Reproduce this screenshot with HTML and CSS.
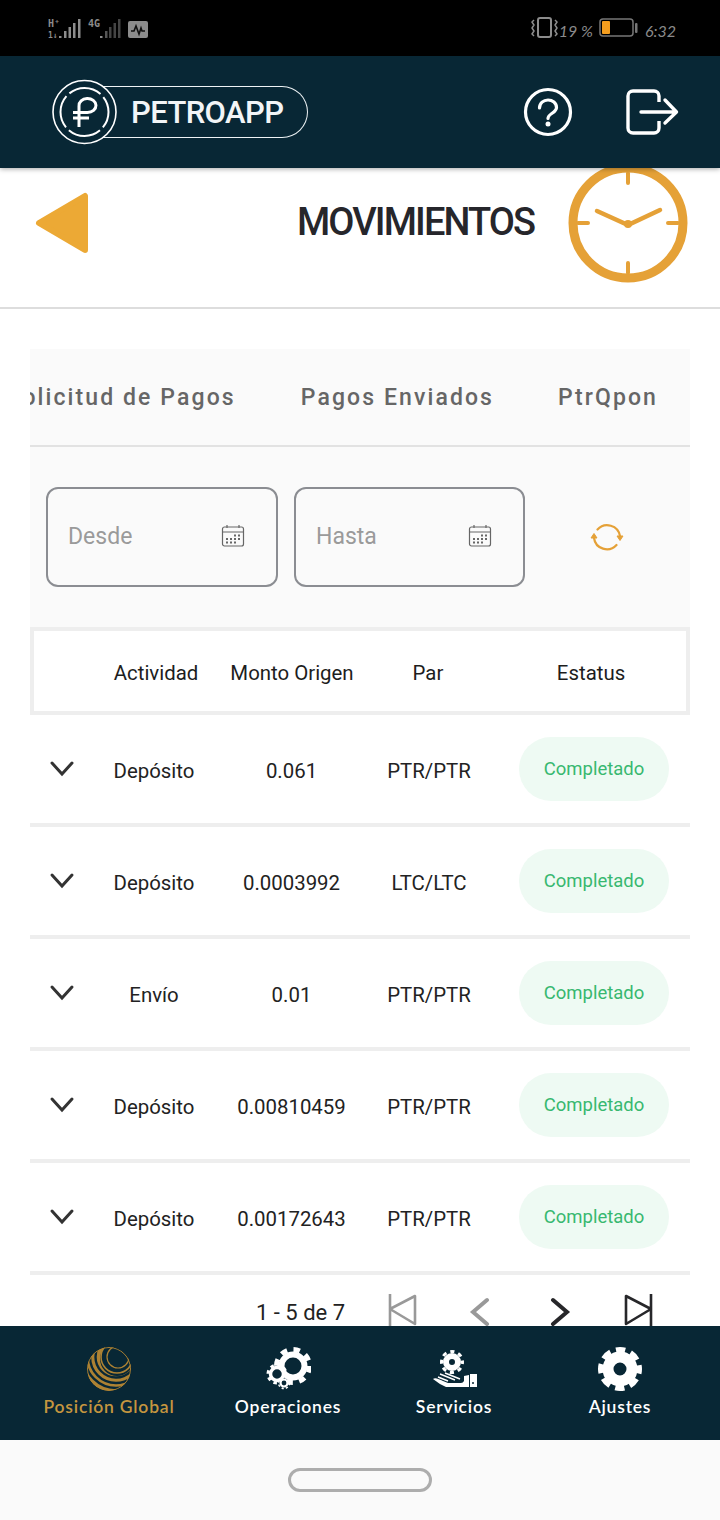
FILE: index.html
```html
<!DOCTYPE html>
<html lang="es">
<head>
<meta charset="utf-8">
<title>PetroApp - Movimientos</title>
<link rel="stylesheet" href="styles.css">
</head>
<body>
<div class="app">
  <div class="statusbar">
    <svg class="st-left" width="110" height="24" viewBox="0 0 110 24">
      <text x="1" y="9" class="st-tiny">H⁺</text>
      <text x="1" y="20" class="st-tiny st-tiny-s">1↓</text>
      <g fill="#8c8c8c"><rect x="12" y="18" width="2.500" height="2"/><rect x="17" y="13" width="2.500" height="7"/><rect x="21.500" y="9" width="2.500" height="11"/><rect x="26" y="5" width="2.500" height="15"/><rect x="31" y="1" width="2.500" height="19"/></g>
      <text x="41" y="9" class="st-tiny">4G</text>
      <g><rect x="53" y="18" width="2.500" height="2" fill="#8c8c8c"/><rect x="58" y="13" width="2.500" height="7" fill="#555"/><rect x="62" y="9" width="2.500" height="11" fill="#444"/><rect x="66.500" y="5" width="2.500" height="15" fill="#444"/><rect x="71" y="1" width="2.500" height="19" fill="#444"/></g>
      <rect x="81" y="3" width="20" height="17" rx="2" fill="#8c8c8c"/>
      <path d="M84 13h3l2-5 3 8 2-6 1 3h3" fill="none" stroke="#111" stroke-width="1.600"/>
    </svg>
    <div class="st-right">
      <svg width="27" height="22" viewBox="0 0 27 22"><rect x="7" y="1" width="13" height="19" rx="2" fill="none" stroke="#8c8c8c" stroke-width="2"/><path d="M3 3l-2 2 2 3-2 3 2 3-2 3 2 2M24 3l2 2-2 3 2 3-2 3 2 3-2 2" fill="none" stroke="#8c8c8c" stroke-width="1.500"/></svg>
      <span class="st-pct">19 %</span>
      <svg class="st-batt" width="39" height="20" viewBox="0 0 39 20"><rect x="1" y="1" width="33" height="17" rx="3" fill="none" stroke="#777" stroke-width="1.500"/><rect x="3" y="3" width="8" height="13" rx="1" fill="#f59e1e"/><rect x="36" y="5" width="2.500" height="10" rx="1" fill="#777"/></svg>
      <span class="st-time">6:32</span>
    </div>
  </div>

  <header class="topbar">
    <div class="logo">
      <svg class="logo-mark" width="65" height="66" viewBox="0 0 65 66">
        <circle cx="32.500" cy="33" r="31.500" fill="#082735" stroke="#fff" stroke-width="1.600"/>
        <circle cx="32.500" cy="33" r="24" fill="none" stroke="#fff" stroke-width="2" stroke-dasharray="33.700 4" stroke-dashoffset="17"/>
        <path d="M27 48V27a8.500 7 0 1 1 8.500 6.500H21M21 39H37" fill="none" stroke="#fff" stroke-width="3"/>
      </svg>
      <div class="logo-pill"><span class="logo-text">PETROAPP</span></div>
    </div>
    <div class="top-actions">
      <svg width="50" height="50" viewBox="0 0 50 50"><circle cx="25" cy="25" r="22.500" fill="none" stroke="#fff" stroke-width="3.200"/><path d="M16.500 21c0-5 4-8 8.500-8s8.500 3 8.500 7.500c0 5.500-8.500 6-8.500 11" fill="none" stroke="#fff" stroke-width="3.200" stroke-linecap="round"/><circle cx="25" cy="37" r="2.500" fill="#fff"/></svg>
      <svg width="54" height="46" viewBox="0 0 54 46"><path d="M34 13V7a5 5 0 0 0-5-5H8a5 5 0 0 0-5 5v32a5 5 0 0 0 5 5h21a5 5 0 0 0 5-5v-7" fill="none" stroke="#fff" stroke-width="3.400"/><path d="M16 23h35M40 11l11.500 12L40 34" fill="none" stroke="#fff" stroke-width="3.400" stroke-linecap="round" stroke-linejoin="round"/></svg>
    </div>
  </header>

  <main class="content">
    <section class="title-row">
      <svg class="back" width="56" height="62" viewBox="0 0 56 62"><path d="M4 31L50 4V58Z" fill="#eca935" stroke="#eca935" stroke-width="6" stroke-linejoin="round"/></svg>
      <h1 class="title">MOVIMIENTOS</h1>
      <svg class="clock" width="120" height="120" viewBox="0 0 120 120">
        <circle cx="60" cy="60" r="55" fill="#fff" stroke="#e5a137" stroke-width="9"/>
        <path d="M60 10V20M60 100V110M10 60H20M100 60H110" stroke="#e5a137" stroke-width="4" stroke-linecap="round"/>
        <path d="M29 48L60 62L92 47" fill="none" stroke="#e5a137" stroke-width="4.500" stroke-linecap="round"/>
        <circle cx="60" cy="61" r="4" fill="#e5a137"/>
      </svg>
    </section>

    <section class="panel">
      <nav class="tabs">
        <span class="tab">Solicitud de Pagos</span>
        <span class="tab">Pagos Enviados</span>
        <span class="tab">PtrQpon</span>
      </nav>
      <div class="filters">
        <div class="field">
          <span class="field-label">Desde</span>
          <svg width="24" height="24" viewBox="0 0 24 24"><g fill="none" stroke="#666" stroke-width="1.200"><rect x="1.500" y="3" width="21" height="19" rx="2"/><path d="M1.500 8h21M6 1v3M18 1v3"/></g><g fill="#666"><rect x="13" y="10.500" width="2" height="2"/><rect x="17" y="10.500" width="2" height="2"/><rect x="5" y="14" width="2" height="2"/><rect x="9" y="14" width="2" height="2"/><rect x="13" y="14" width="2" height="2"/><rect x="17" y="14" width="2" height="2"/><rect x="5" y="17.500" width="2" height="2"/><rect x="9" y="17.500" width="2" height="2"/><rect x="13" y="17.500" width="2" height="2"/></g></svg>
        </div>
        <div class="field">
          <span class="field-label">Hasta</span>
          <svg width="24" height="24" viewBox="0 0 24 24"><g fill="none" stroke="#666" stroke-width="1.200"><rect x="1.500" y="3" width="21" height="19" rx="2"/><path d="M1.500 8h21M6 1v3M18 1v3"/></g><g fill="#666"><rect x="13" y="10.500" width="2" height="2"/><rect x="17" y="10.500" width="2" height="2"/><rect x="5" y="14" width="2" height="2"/><rect x="9" y="14" width="2" height="2"/><rect x="13" y="14" width="2" height="2"/><rect x="17" y="14" width="2" height="2"/><rect x="5" y="17.500" width="2" height="2"/><rect x="9" y="17.500" width="2" height="2"/><rect x="13" y="17.500" width="2" height="2"/></g></svg>
        </div>
        <div class="refresh">
          <svg width="36" height="30" viewBox="0 0 36 30"><path d="M8.500 7.500A13 13 0 0 1 31 14M27.500 23A13 13 0 0 1 5 16" fill="none" stroke="#e5a137" stroke-width="2.200" stroke-linecap="round"/><path d="M2 16L5 11.500 8 16ZM28 14L31 18.500 34 14Z" fill="#e5a137" stroke="#e5a137" stroke-linejoin="round"/></svg>
        </div>
      </div>
    </section>

    <section class="table">
      <div class="thead">
        <span></span><span>Actividad</span><span>Monto Origen</span><span>Par</span><span class="th-status">Estatus</span>
      </div>
      <div class="row">
        <svg class="chev" width="28" height="18" viewBox="0 0 28 18"><path d="M4 3L14 14 24 3" fill="none" stroke="#333" stroke-width="3" stroke-linecap="round"/></svg>
        <span>Depósito</span><span>0.061</span><span>PTR/PTR</span><span class="pill">Completado</span>
      </div>
      <div class="row">
        <svg class="chev" width="28" height="18" viewBox="0 0 28 18"><path d="M4 3L14 14 24 3" fill="none" stroke="#333" stroke-width="3" stroke-linecap="round"/></svg>
        <span>Depósito</span><span>0.0003992</span><span>LTC/LTC</span><span class="pill">Completado</span>
      </div>
      <div class="row">
        <svg class="chev" width="28" height="18" viewBox="0 0 28 18"><path d="M4 3L14 14 24 3" fill="none" stroke="#333" stroke-width="3" stroke-linecap="round"/></svg>
        <span>Envío</span><span>0.01</span><span>PTR/PTR</span><span class="pill">Completado</span>
      </div>
      <div class="row">
        <svg class="chev" width="28" height="18" viewBox="0 0 28 18"><path d="M4 3L14 14 24 3" fill="none" stroke="#333" stroke-width="3" stroke-linecap="round"/></svg>
        <span>Depósito</span><span>0.00810459</span><span>PTR/PTR</span><span class="pill">Completado</span>
      </div>
      <div class="row">
        <svg class="chev" width="28" height="18" viewBox="0 0 28 18"><path d="M4 3L14 14 24 3" fill="none" stroke="#333" stroke-width="3" stroke-linecap="round"/></svg>
        <span>Depósito</span><span>0.00172643</span><span>PTR/PTR</span><span class="pill">Completado</span>
      </div>
      <div class="pager">
        <span class="pager-text">1 - 5 de 7</span>
        <svg class="pg pg-first" width="30" height="36" viewBox="0 0 30 36"><path d="M2 0V36M27 2V30L2 15Z" fill="none" stroke="#999" stroke-width="2.600" stroke-linejoin="round"/></svg>
        <svg class="pg pg-prev" width="22" height="30" viewBox="0 0 22 30"><path d="M18 3L4 15 18 27" fill="none" stroke="#999" stroke-width="4" stroke-linecap="round"/></svg>
        <svg class="pg pg-next" width="22" height="30" viewBox="0 0 22 30"><path d="M4 3L18 15 4 27" fill="none" stroke="#27272a" stroke-width="4" stroke-linecap="round"/></svg>
        <svg class="pg pg-last" width="30" height="36" viewBox="0 0 30 36"><path d="M28 0V36M3 2V30L28 15Z" fill="none" stroke="#27272a" stroke-width="2.600" stroke-linejoin="round"/></svg>
      </div>
    </section>
  </main>

  <nav class="bottomnav">
    <div class="nav-item nav-active">
      <svg width="46" height="46" viewBox="0 0 46 46">
        <defs><clipPath id="globe"><circle cx="23" cy="23" r="22"/></clipPath></defs>
        <g clip-path="url(#globe)">
          <circle cx="23" cy="23" r="22" fill="#ad8233"/>
          <g fill="none" stroke="#082735" stroke-width="2.400">
            <circle cx="30" cy="11" r="31"/><circle cx="30" cy="11" r="26"/><circle cx="30" cy="11" r="20.500"/>
          </g>
          <circle cx="31" cy="13" r="17" fill="#082735"/>
          <circle cx="31" cy="11" r="16" fill="none" stroke="#ad8233" stroke-width="1.600"/>
          <circle cx="32" cy="11" r="11" fill="none" stroke="#ad8233" stroke-width="1.200"/>
          <circle cx="23" cy="23" r="21.500" fill="none" stroke="#ad8233" stroke-width="1"/>
        </g>
      </svg>
      <span class="nav-label">Posición Global</span>
    </div>
    <div class="nav-item">
      <svg width="46" height="46" viewBox="0 0 46 46">
        <circle cx="28" cy="20" r="11.500" fill="none" stroke="#fff" stroke-width="6"/>
        <circle cx="28" cy="20" r="16.500" fill="none" stroke="#fff" stroke-width="5" stroke-dasharray="6.500 6.460"/>
        <circle cx="12" cy="28" r="6.500" fill="#082735" stroke="#fff" stroke-width="3.500"/>
        <circle cx="12" cy="28" r="9" fill="none" stroke="#fff" stroke-width="3" stroke-dasharray="3.500 3.570"/>
        <circle cx="19" cy="37" r="3.500" fill="#082735" stroke="#fff" stroke-width="2.200"/>
        <circle cx="19" cy="37" r="5.500" fill="none" stroke="#fff" stroke-width="1.500" stroke-dasharray="2.200 2.120"/>
      </svg>
      <span class="nav-label">Operaciones</span>
    </div>
    <div class="nav-item">
      <svg width="46" height="46" viewBox="0 0 46 46">
        <circle cx="21" cy="16" r="6" fill="none" stroke="#fff" stroke-width="6"/>
        <circle cx="21" cy="16" r="10.500" fill="none" stroke="#fff" stroke-width="3" stroke-dasharray="4.200 4.050" stroke-dashoffset="2.100"/>
        <path d="M2 33C4 31 8 33 12 35L17 37H30Q32 37 33 35V30L38 29V41H18H15Q8 38 2 33Z" fill="#fff"/>
        <path d="M39 28H46V41H39Z" fill="#fff"/>
        <path d="M7 31L17 35M9 28L24 34M14 27L29 33" fill="none" stroke="#fff" stroke-width="1.400"/>
        <circle cx="42" cy="37" r="1" fill="#082735"/>
      </svg>
      <span class="nav-label">Servicios</span>
    </div>
    <div class="nav-item">
      <svg width="46" height="46" viewBox="0 0 46 46">
        <circle cx="23" cy="23" r="12" fill="none" stroke="#fff" stroke-width="11"/>
        <circle cx="23" cy="23" r="18.500" fill="none" stroke="#fff" stroke-width="7" stroke-dasharray="9 5.530" stroke-dashoffset="4.500"/>
      </svg>
      <span class="nav-label">Ajustes</span>
    </div>
  </nav>

  <div class="androidbar"><span class="home-pill"></span></div>
</div>
</body>
</html>
```
FILE: styles.css
```css
* { box-sizing: border-box; }
html, body { margin: 0; padding: 0; }
body { background: #fff; font-family: "Roboto", "Liberation Sans", sans-serif; }

.app { width: 720px; height: 1520px; display: flex; flex-direction: column; overflow: hidden; }

/* status bar */
.statusbar { height: 56px; flex: none; background: #000; display: flex; justify-content: space-between; align-items: center; padding: 0 44px 0 47px; }
.st-left { margin-top: 4px; }
.st-tiny { font: 700 10px "DejaVu Sans Mono", monospace; fill: #8c8c8c; }
.st-tiny-s { font-size: 8px; }
.st-right { display: flex; align-items: center; color: #8a8a8a; font: italic 400 16px "Lato", "Roboto", sans-serif; }
.st-pct { margin: 4px 6px 0 1px; }
.st-time { margin: 4px 0 0 7px; }

/* top bar */
.topbar { height: 112px; flex: none; background: #082735; display: flex; align-items: center; justify-content: space-between; padding: 0 41px 0 52px; position: relative; z-index: 2; box-shadow: 0 1px 5px rgba(0,0,0,.35); }
.logo { display: flex; align-items: center; margin-top: -1px; }
.logo-mark { position: relative; z-index: 1; margin-right: -18px; }
.logo-pill { width: 209px; height: 52px; border: 1.500px solid #eef3f5; border-left: 0; border-radius: 0 26px 26px 0; display: flex; align-items: center; padding: 2px 0 0 32px; }
.logo-text { color: #f2f5f7; font: 500 31px "Roboto", sans-serif; letter-spacing: -.6px; line-height: 1; }
.top-actions { display: flex; align-items: center; gap: 52px; }

/* content */
.content { flex: 1; min-height: 0; overflow: hidden; background: #fff; }
.title-row { height: 141px; border-bottom: 2px solid #ddd; display: flex; align-items: flex-start; padding: 0 32px 0 35px; }
.back { flex: none; margin-top: 24px; }
.title { margin: 34px 0 0 206px; width: 238px; flex: none; font: 500 38px/40px "Roboto", sans-serif; color: #26262b; letter-spacing: -1.900px; white-space: nowrap; }
.clock { flex: none; margin: -5px 0 0 33px; }

.panel { margin: 40px 30px 0; background: #fafafa; }
.tabs { height: 98px; border-bottom: 2px solid #e2e2e2; display: flex; justify-content: flex-end; align-items: center; gap: 65px; padding: 0 32px 0 0; overflow: hidden; }
.tab { flex: none; font: 500 23px "Roboto", sans-serif; letter-spacing: 2.100px; color: #666; white-space: nowrap; }
.tab + .tab + .tab { margin-left: -1px; }
.filters { height: 180px; padding: 40px 0 0 16px; display: flex; align-items: flex-start; gap: 16px; }
.field { width: 232px; height: 100px; border: 2px solid #8b8d92; border-radius: 12px; display: flex; align-items: center; justify-content: space-between; padding: 0 31px 2px 20px; }
.field + .field { width: 231px; }
.field-label { color: #9a9a9a; font-size: 23px; }
.refresh { flex: 1; height: 100px; padding-right: 18px; display: flex; align-items: center; justify-content: center; }

.table { margin: 0 30px; }
.thead { height: 88px; border: 4px solid #eee; padding-top: 4px; background: #fff; display: grid; grid-template-columns: 60px 124px 148px 124px 1fr; align-items: center; text-align: center; font-size: 20.400px; color: #1d1d1d; }
.th-status { padding-left: 6px; }
.row { height: 112px; border-bottom: 4px solid #eee; padding-top: 4px; display: grid; grid-template-columns: 65px 118px 157px 118px 1fr; align-items: center; text-align: center; font-size: 20.400px; color: #222; }
.chev { justify-self: center; margin: -5px 2px 0 0; }
.pill { justify-self: end; margin: -4px 21px 0 0; width: 150px; height: 64px; border-radius: 32px; background: #eefaf3; color: #38b870; font-size: 18.500px; display: flex; align-items: center; justify-content: center; padding-bottom: 1px; }

.pager { height: 52px; display: flex; align-items: center; padding: 22px 0 0 226px; color: #222; font-size: 22px; }
.pager-text { width: 132px; flex: none; }
.pg { flex: none; }
.pg-prev { margin-left: 51px; }
.pg-next { margin-left: 58px; }
.pg-last { margin-left: 52px; }

/* bottom nav */
.bottomnav { height: 114px; flex: none; background: #082735; display: grid; grid-template-columns: 218px 140px 192px 140px; position: relative; z-index: 2; }
.nav-item { display: flex; flex-direction: column; align-items: center; padding-top: 20px; color: #fff; }
.nav-label { font: 600 17.500px/26px "Lato", sans-serif; letter-spacing: .8px; margin-top: 2px; white-space: nowrap; }
.nav-active { color: #c5963f; }

.androidbar { height: 80px; flex: none; background: #fafafa; display: flex; align-items: center; justify-content: center; }
.home-pill { width: 144px; height: 24px; border: 3px solid #adadad; border-radius: 12px; }
```
